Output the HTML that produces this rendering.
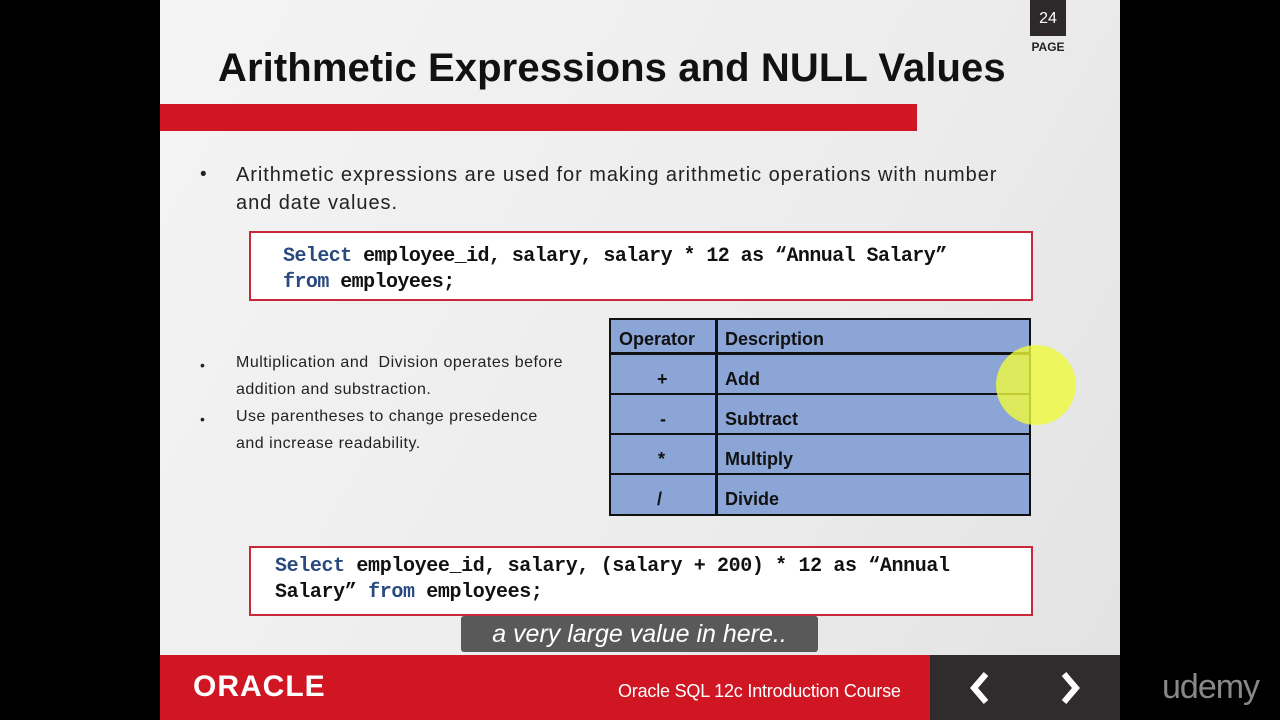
<!DOCTYPE html>
<html><head><meta charset="utf-8"><style>
body{margin:0;width:1280px;height:720px;background:#000;position:relative;overflow:hidden;font-family:"Liberation Sans",sans-serif}
.slide{position:absolute;left:160px;top:0;width:960px;height:720px;background:linear-gradient(120deg,#f4f4f4 0%,#ececec 60%,#e2e2e2 100%);overflow:hidden}
.abs{position:absolute}
.code{position:absolute;border:2px solid #c8283a;background:#fff;font-family:"Liberation Mono",monospace;font-weight:bold;color:#111;box-sizing:border-box;white-space:pre;line-height:26px}
.kw{color:#2a4a7f}
.tb{position:absolute;left:449px;top:318px;width:422px;height:198px;background:#8aa5d6;border:2px solid #111;box-sizing:border-box;font-weight:bold;font-size:18px;color:#111}
.tb .h{position:absolute;left:0;right:0;height:2px;background:#111}
.tb .v{position:absolute;top:0;bottom:0;left:104px;width:3px;background:#111}
.tb .c{position:absolute;line-height:20px}
</style></head><body>
<div class="slide">
  <div class="abs" style="left:870px;top:0;width:36px;height:36px;background:#2d292b;color:#fff;font-size:16px;text-align:center;line-height:38px">24</div>
  <div class="abs" style="left:870px;top:40px;width:36px;color:#222;font-size:12px;font-weight:bold;text-align:center">PAGE</div>
  <div class="abs" style="left:58px;top:46px;font-size:40px;font-weight:bold;color:#111;letter-spacing:0.1px;white-space:nowrap">Arithmetic Expressions and NULL Values</div>
  <div class="abs" style="left:0;top:104px;width:757px;height:27px;background:#d11623"></div>
  <div class="abs" style="left:40px;top:164px;font-size:19px;color:#222">•</div>
  <div class="abs" style="left:76px;top:161px;font-size:20px;color:#222;line-height:28px;white-space:nowrap;letter-spacing:0.95px">Arithmetic expressions are used for making arithmetic operations with number<br>and date values.</div>
  <div class="code" style="left:89px;top:231px;width:784px;height:70px;padding:11px 0 0 32px;font-size:20px;letter-spacing:-0.56px"><span class="kw">Select</span> employee_id, salary, salary * 12 as “Annual Salary”
<span class="kw">from</span> employees;</div>
  <div class="abs" style="left:40px;top:352px;font-size:14px;color:#222;line-height:27px">•<br><br>•</div>
  <div class="abs" style="left:76px;top:349px;font-size:16px;color:#222;line-height:27px;white-space:nowrap;letter-spacing:0.5px">Multiplication and &nbsp;Division operates before<br>addition and substraction.<br>Use parentheses to change presedence<br>and increase readability.</div>
  <div class="tb">
    <div class="v"></div>
    <div class="h" style="top:32px;height:3px"></div>
    <div class="h" style="top:73px"></div>
    <div class="h" style="top:113px"></div>
    <div class="h" style="top:153px"></div>
    <div class="c" style="left:8px;top:9px">Operator</div><div class="c" style="left:114px;top:9px">Description</div>
    <div class="c" style="left:46px;top:49px">+</div><div class="c" style="left:114px;top:49px">Add</div>
    <div class="c" style="left:49px;top:89px">-</div><div class="c" style="left:114px;top:89px">Subtract</div>
    <div class="c" style="left:47px;top:129px">*</div><div class="c" style="left:114px;top:129px">Multiply</div>
    <div class="c" style="left:46px;top:169px">/</div><div class="c" style="left:114px;top:169px">Divide</div>
  </div>
  <div class="abs" style="left:836px;top:345px;width:80px;height:80px;border-radius:50%;background:rgba(240,250,60,0.8)"></div>
  <div class="code" style="left:89px;top:546px;width:784px;height:70px;padding:6px 0 0 24px;font-size:20px;letter-spacing:-0.37px"><span class="kw">Select</span> employee_id, salary, (salary + 200) * 12 as “Annual
Salary” <span class="kw">from</span> employees;</div>
  <div class="abs" style="left:301px;top:616px;width:357px;height:36px;background:#595959;border-radius:3px;color:#fff;font-style:italic;font-size:25px;text-align:center;line-height:36px">a very large value in here..</div>
  <div class="abs" style="left:0;top:655px;width:770px;height:65px;background:#d11623"></div>
  <div class="abs" style="left:770px;top:655px;width:190px;height:65px;background:#302c2e"></div>
  <div class="abs" style="left:33px;top:671px;color:#fff;font-size:30px;font-weight:bold;letter-spacing:1px;line-height:32px">ORACLE</div>
  <div class="abs" style="left:458px;top:681px;color:#fff;font-size:18px;letter-spacing:-0.2px">Oracle SQL 12c Introduction Course</div>
  <svg class="abs" style="left:800px;top:670px" width="130" height="36"><path d="M26 4 L14 18 L26 32" stroke="#fff" stroke-width="6" fill="none"/><path d="M104 4 L116 18 L104 32" stroke="#fff" stroke-width="6" fill="none"/></svg>
</div>
<div class="abs" style="left:1162px;top:668px;color:#888;font-size:34px;letter-spacing:-1px">udemy</div>
</body></html>
